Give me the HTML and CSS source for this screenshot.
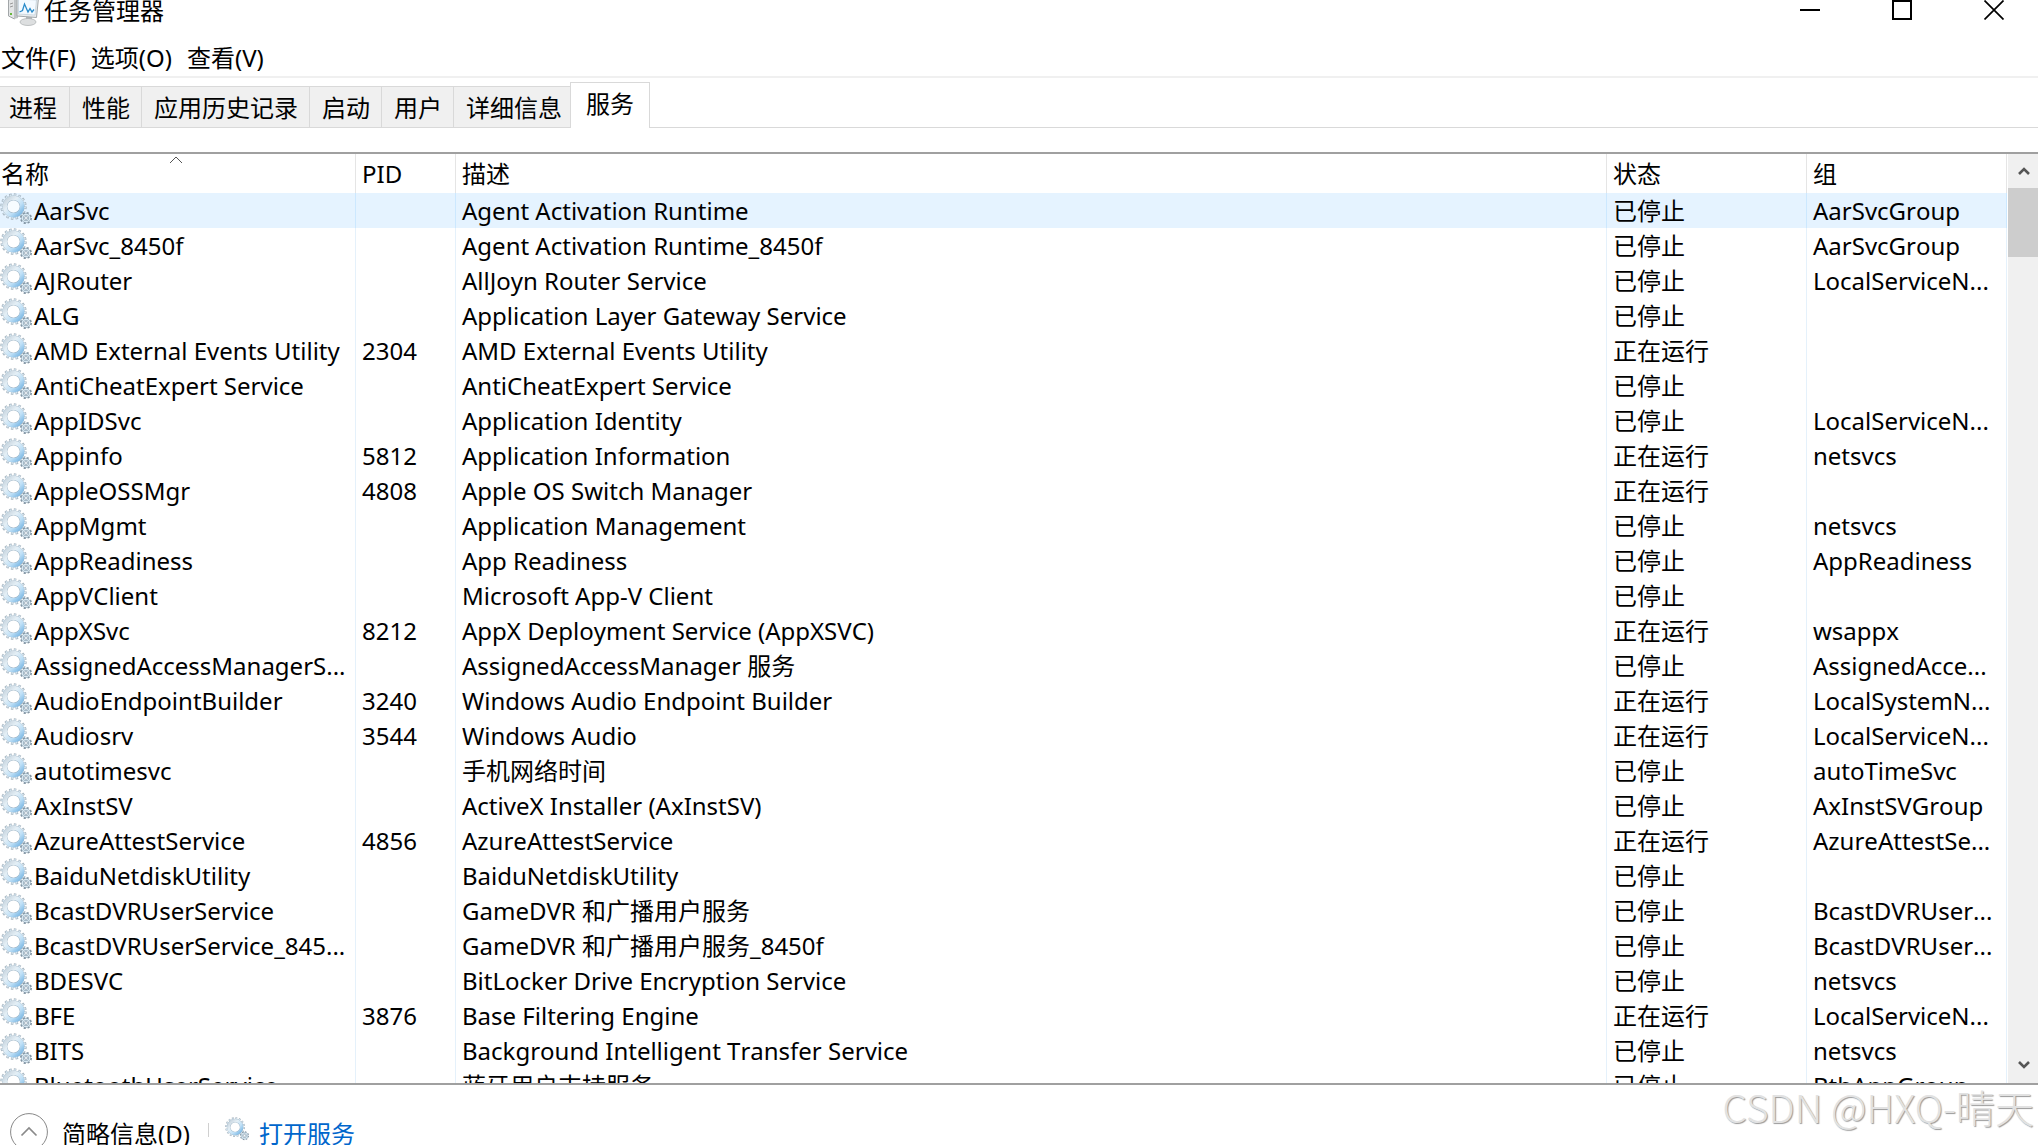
FILE: index.html
```html
<!DOCTYPE html>
<html lang="zh-CN">
<head>
<meta charset="utf-8">
<meta name="viewport" content="width=device-width, initial-scale=1">
<title>任务管理器</title>
<link rel="stylesheet" href="styles.css">
</head>
<body>
<svg class="defs" aria-hidden="true">
  <defs>
    <linearGradient id="steel" x1="0" y1="0" x2="1" y2="1">
      <stop offset="0" stop-color="#c3d0da"/><stop offset=".35" stop-color="#e4eff6"/><stop offset=".65" stop-color="#bfe0f7"/><stop offset="1" stop-color="#6fb0e0"/>
    </linearGradient>
    <symbol id="gears" viewBox="0 0 32 32">
      <circle cx="13.500" cy="13.500" r="12" fill="none" stroke="#a3b1bc" stroke-width="2.400" stroke-dasharray="2.500 2.212"/>
      <circle cx="13.500" cy="13.500" r="8.600" fill="none" stroke="#9db3c4" stroke-width="5"/>
      <circle cx="13.500" cy="13.500" r="8.700" fill="none" stroke="url(#steel)" stroke-width="4.200"/>
      <circle cx="13.500" cy="13.500" r="11.600" fill="none" stroke="#d3e4ef" stroke-width="1.800" stroke-dasharray="1.500 3.055" stroke-dashoffset="-.5"/>
      <circle cx="13.500" cy="13.500" r="6" fill="#fff" fill-opacity=".7"/>
      <circle cx="26" cy="25" r="5" fill="none" stroke="#8496a4" stroke-width="2" stroke-dasharray="2.100 1.827"/>
      <circle cx="26" cy="25" r="3.500" fill="#f6fafc" stroke="#8aa0b0" stroke-width="2.400"/>
      <circle cx="26" cy="25" r="3.600" fill="none" stroke="#d8e8f2" stroke-width="1.500"/>
      <circle cx="26" cy="25" r="1.500" fill="#fff" stroke="#7f98aa" stroke-width=".7"/>
    </symbol>
  </defs>
</svg>
<div class="window">
  <header class="titlebar">
    <svg class="app-icon" viewBox="0 0 32 32" aria-hidden="true">
      <path d="M.5 6l6-2v21l-6-3z" fill="#e3e5e6" stroke="#a2a6a8"/>
      <path d="M6 4h4v20l-4 1z" fill="#bfc3c5"/>
      <path d="M2 10l3-1M2 13l3-1" stroke="#999"/>
      <path d="M2 19h2v2H2z" fill="#68b83c"/>
      <path d="M18 22h6v5h-6z" fill="#b6babc"/>
      <ellipse cx="20" cy="28" rx="8" ry="3.500" fill="#dddfe0" stroke="#a9adaf" stroke-width=".7"/>
      <path d="M9 3l21.500 1-2 19.500L9 22z" fill="#e9ecee" stroke="#a2a8ab"/>
      <path d="M10.500 5l18 1-1.500 15-16.500-1z" fill="#f4faff" stroke="#b9c7d1" stroke-width=".6"/>
      <path d="M11.500 18l3-1.500 2-6.500 3.500 8 2-3.500 2 3.500 2-2.500" fill="none" stroke="#2a8ccb" stroke-width="1.300"/>
    </svg>
    <h1 class="title">任务管理器</h1>
    <div class="window-buttons">
      <button type="button" aria-label="最小化"><svg viewBox="0 0 20 20"><path d="M0 10h20" stroke="#000" stroke-width="2"/></svg></button>
      <button type="button" aria-label="最大化"><svg viewBox="0 0 20 20"><path d="M1 1h18v18H1z" fill="none" stroke="#000" stroke-width="2"/></svg></button>
      <button type="button" aria-label="关闭"><svg viewBox="0 0 20 20"><path d="M.5.5l19 19M19.500.5l-19 19" stroke="#000" stroke-width="1.700"/></svg></button>
    </div>
  </header>
  <nav class="menubar">
    <button type="button">文件(F)</button>
    <button type="button">选项(O)</button>
    <button type="button">查看(V)</button>
  </nav>
  <div class="tabs" role="tablist">
    <button type="button" role="tab" class="tab">进程</button>
    <button type="button" role="tab" class="tab">性能</button>
    <button type="button" role="tab" class="tab">应用历史记录</button>
    <button type="button" role="tab" class="tab">启动</button>
    <button type="button" role="tab" class="tab">用户</button>
    <button type="button" role="tab" class="tab">详细信息</button>
    <button type="button" role="tab" class="tab selected" aria-selected="true">服务</button>
  </div>
  <main class="list">
    <div class="list-body">
      <table class="services">
        <colgroup><col class="col-name"><col class="col-pid"><col><col class="col-state"><col class="col-group"></colgroup>
        <thead>
          <tr><th class="sorted" aria-sort="ascending">名称<svg class="sort" viewBox="0 0 14 8" aria-hidden="true"><path d="M1 7l6-6 6 6" fill="none" stroke="#555"/></svg></th><th>PID</th><th>描述</th><th>状态</th><th>组</th></tr>
        </thead>
        <tbody>
          <tr class="hot"><td><svg class="gear"><use href="#gears"/></svg>AarSvc</td><td></td><td>Agent Activation Runtime</td><td>已停止</td><td>AarSvcGroup</td></tr>
          <tr><td><svg class="gear"><use href="#gears"/></svg>AarSvc_8450f</td><td></td><td>Agent Activation Runtime_8450f</td><td>已停止</td><td>AarSvcGroup</td></tr>
          <tr><td><svg class="gear"><use href="#gears"/></svg>AJRouter</td><td></td><td>AllJoyn Router Service</td><td>已停止</td><td>LocalServiceN...</td></tr>
          <tr><td><svg class="gear"><use href="#gears"/></svg>ALG</td><td></td><td>Application Layer Gateway Service</td><td>已停止</td><td></td></tr>
          <tr><td><svg class="gear"><use href="#gears"/></svg>AMD External Events Utility</td><td>2304</td><td>AMD External Events Utility</td><td>正在运行</td><td></td></tr>
          <tr><td><svg class="gear"><use href="#gears"/></svg>AntiCheatExpert Service</td><td></td><td>AntiCheatExpert Service</td><td>已停止</td><td></td></tr>
          <tr><td><svg class="gear"><use href="#gears"/></svg>AppIDSvc</td><td></td><td>Application Identity</td><td>已停止</td><td>LocalServiceN...</td></tr>
          <tr><td><svg class="gear"><use href="#gears"/></svg>Appinfo</td><td>5812</td><td>Application Information</td><td>正在运行</td><td>netsvcs</td></tr>
          <tr><td><svg class="gear"><use href="#gears"/></svg>AppleOSSMgr</td><td>4808</td><td>Apple OS Switch Manager</td><td>正在运行</td><td></td></tr>
          <tr><td><svg class="gear"><use href="#gears"/></svg>AppMgmt</td><td></td><td>Application Management</td><td>已停止</td><td>netsvcs</td></tr>
          <tr><td><svg class="gear"><use href="#gears"/></svg>AppReadiness</td><td></td><td>App Readiness</td><td>已停止</td><td>AppReadiness</td></tr>
          <tr><td><svg class="gear"><use href="#gears"/></svg>AppVClient</td><td></td><td>Microsoft App-V Client</td><td>已停止</td><td></td></tr>
          <tr><td><svg class="gear"><use href="#gears"/></svg>AppXSvc</td><td>8212</td><td>AppX Deployment Service (AppXSVC)</td><td>正在运行</td><td>wsappx</td></tr>
          <tr><td><svg class="gear"><use href="#gears"/></svg>AssignedAccessManagerS...</td><td></td><td>AssignedAccessManager 服务</td><td>已停止</td><td>AssignedAcce...</td></tr>
          <tr><td><svg class="gear"><use href="#gears"/></svg>AudioEndpointBuilder</td><td>3240</td><td>Windows Audio Endpoint Builder</td><td>正在运行</td><td>LocalSystemN...</td></tr>
          <tr><td><svg class="gear"><use href="#gears"/></svg>Audiosrv</td><td>3544</td><td>Windows Audio</td><td>正在运行</td><td>LocalServiceN...</td></tr>
          <tr><td><svg class="gear"><use href="#gears"/></svg>autotimesvc</td><td></td><td>手机网络时间</td><td>已停止</td><td>autoTimeSvc</td></tr>
          <tr><td><svg class="gear"><use href="#gears"/></svg>AxInstSV</td><td></td><td>ActiveX Installer (AxInstSV)</td><td>已停止</td><td>AxInstSVGroup</td></tr>
          <tr><td><svg class="gear"><use href="#gears"/></svg>AzureAttestService</td><td>4856</td><td>AzureAttestService</td><td>正在运行</td><td>AzureAttestSe...</td></tr>
          <tr><td><svg class="gear"><use href="#gears"/></svg>BaiduNetdiskUtility</td><td></td><td>BaiduNetdiskUtility</td><td>已停止</td><td></td></tr>
          <tr><td><svg class="gear"><use href="#gears"/></svg>BcastDVRUserService</td><td></td><td>GameDVR 和广播用户服务</td><td>已停止</td><td>BcastDVRUser...</td></tr>
          <tr><td><svg class="gear"><use href="#gears"/></svg>BcastDVRUserService_845...</td><td></td><td>GameDVR 和广播用户服务_8450f</td><td>已停止</td><td>BcastDVRUser...</td></tr>
          <tr><td><svg class="gear"><use href="#gears"/></svg>BDESVC</td><td></td><td>BitLocker Drive Encryption Service</td><td>已停止</td><td>netsvcs</td></tr>
          <tr><td><svg class="gear"><use href="#gears"/></svg>BFE</td><td>3876</td><td>Base Filtering Engine</td><td>正在运行</td><td>LocalServiceN...</td></tr>
          <tr><td><svg class="gear"><use href="#gears"/></svg>BITS</td><td></td><td>Background Intelligent Transfer Service</td><td>已停止</td><td>netsvcs</td></tr>
          <tr><td><svg class="gear"><use href="#gears"/></svg>BluetoothUserService</td><td></td><td>蓝牙用户支持服务</td><td>已停止</td><td>BthAppGroup</td></tr>
        </tbody>
      </table>
    </div>
    <div class="scrollbar">
      <button type="button" aria-label="向上滚动"><svg viewBox="0 0 12 10"><path d="M1 8l5-5 5 5" fill="none" stroke="#555" stroke-width="2.600"/></svg></button>
      <div class="track"><div class="thumb"></div></div>
      <button type="button" aria-label="向下滚动"><svg viewBox="0 0 12 10"><path d="M1 2l5 5 5-5" fill="none" stroke="#555" stroke-width="2.600"/></svg></button>
    </div>
  </main>
  <footer class="footer">
    <button type="button" class="fewer">
      <svg viewBox="0 0 38 38" aria-hidden="true"><circle cx="19" cy="19" r="18.400" fill="#fff" stroke="#888"/><path d="M11.500 22.500l7.500-7.500 7.500 7.500" fill="none" stroke="#8a8a8a" stroke-width="1.700"/></svg>
      <span>简略信息(<u>D</u>)</span>
    </button>
    <span class="divider"></span>
    <a class="open" href="#services"><svg class="gear-small" aria-hidden="true"><use href="#gears"/></svg>打开服务</a>
    <span class="watermark">CSDN @HXQ-晴天</span>
  </footer>
</div>
</body>
</html>
```
FILE: styles.css
```css
* { box-sizing: border-box; }

body {
  margin: 0;
  overflow: hidden;
  background: #fff;
  color: #000;
  font: 24px/34px "Noto Sans", "Noto Sans CJK SC", sans-serif;
  font-kerning: none;
}

button {
  margin: 0;
  padding: 0;
  border: 0;
  background: none;
  color: inherit;
  font: inherit;
  font-kerning: none;
}

.defs { position: absolute; width: 0; height: 0; }

.window {
  display: flex;
  flex-direction: column;
  height: 100vh;
  overflow: hidden;
}

/* Title bar */
.titlebar {
  display: flex;
  flex: none;
  align-items: flex-start;
  height: 40px;
}
.app-icon { width: 32px; height: 32px; margin: -6px 4px 0 8px; }
.title { margin: -6px 0 0; font-size: 24px; font-weight: 400; }
.window-buttons { display: flex; margin: 0 -2px 0 auto; }
.window-buttons button { width: 92px; height: 20px; }
.window-buttons svg { display: block; width: 20px; height: 20px; margin: 0 auto; }

/* Menus */
.menubar {
  display: flex;
  flex: none;
  gap: 15px;
  height: 38px;
  padding-left: 1px;
  border-bottom: 2px solid #f0f0f0;
}

/* Tabs */
.tabs {
  display: flex;
  flex: none;
  align-items: flex-end;
  height: 50px;
  box-shadow: inset 0 -1px #d9d9d9;
}
.tab {
  height: 42px;
  padding: 2px 11px 0 12px;
  border: solid #d9d9d9;
  border-width: 1px 1px 1px 0;
  background: #f0f0f0;
}
.tab:first-child { padding-left: 9px; padding-right: 12px; }
.tab.selected {
  height: 46px;
  margin-left: -4px;
  padding: 0 15px 3px;
  border-width: 1px 1px 0;
  background: #fff;
}

/* Service list */
.list {
  display: flex;
  flex: 1;
  min-height: 0;
  margin-top: 24px;
  border: solid #a0a0a0;
  border-width: 2px 0;
}
.list-body { flex: 1; min-width: 0; overflow: hidden; }
.services {
  width: 100%;
  border-collapse: separate;
  border-spacing: 0;
  table-layout: fixed;
}
.col-name { width: 356px; }
.col-pid { width: 100px; }
.col-state, .col-group { width: 200px; }
th, td {
  padding: 0 0 0 6px;
  border-right: 1px solid #e5f1fb;
  overflow: hidden;
  text-align: left;
  font-weight: 400;
  white-space: nowrap;
}
th { height: 39px; border-color: #e5e5e5; }
td { height: 35px; line-height: 35px; }
td:first-child { padding-left: 0; }
th.sorted { position: relative; padding-left: 1px; }
.sort { position: absolute; top: 2px; left: 50%; width: 14px; height: 8px; margin-left: -9px; }
.hot td { border-color: #cce8ff; background: #e5f3ff; }
.gear { width: 32px; height: 32px; margin-right: 2px; vertical-align: top; }

.scrollbar {
  display: flex;
  flex-direction: column;
  width: 30px;
  margin-left: 1px;
  background: #f0f0f0;
}
.scrollbar button { height: 36px; padding-left: 2px; }
.scrollbar button:first-child { height: 34px; }
.scrollbar svg { display: block; width: 12px; height: 10px; margin: 0 auto; }
.track { flex: 1; }
.thumb { height: 69px; background: #cdcdcd; }

/* Footer */
.footer {
  display: flex;
  flex: none;
  align-items: flex-start;
  height: 60px;
  padding: 28px 4px 0 10px;
  overflow: hidden;
}
.fewer { display: flex; gap: 14px; height: 38px; }
.fewer svg { flex: none; width: 38px; height: 38px; }
.fewer span { padding-top: 4px; }
.fewer u { text-underline-offset: 3px; }
.divider { width: 1px; height: 14px; margin: 10px 16px 0 18px; background: #d0d0d0; }
.open { display: flex; gap: 10px; padding-top: 4px; color: #0066cc; text-decoration: none; }
.gear-small { width: 24px; height: 24px; }
.watermark {
  margin: -30px 0 0 auto;
  color: #e2e2e2;
  font: 300 39px/46px "Noto Sans CJK SC", sans-serif;
  text-shadow: 1px 1px 1px #999;
}
```
